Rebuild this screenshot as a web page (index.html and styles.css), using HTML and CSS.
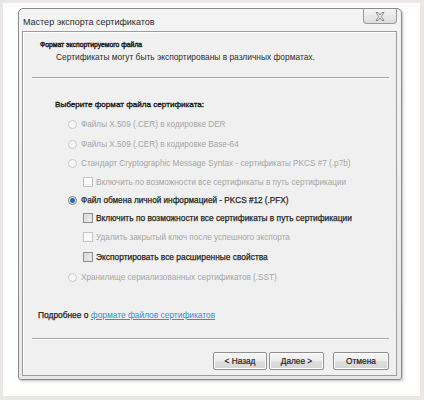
FILE: index.html
```html
<!DOCTYPE html>
<html lang="ru">
<head>
<meta charset="utf-8">
<link rel="stylesheet" href="styles.css">
</head>
<body>
<div class="frame">
  <div class="window">
    <div class="titlebar">
      <div class="title">Мастер экспорта сертификатов</div>
      <div class="close">
        <svg width="10" height="9" viewBox="0 0 10 9"><path d="M1 0.5 H3 L5 3 L7 0.5 H9 L6.2 4.5 L9 8.5 H7 L5 6 L3 8.5 H1 L3.8 4.5 Z" fill="#f4f4f4" stroke="#6e6e6e" stroke-width="0.8" stroke-linejoin="round"/></svg>
      </div>
    </div>
    <div class="panel">
      <div class="header">
        <div class="h-title">Формат экспортируемого файла</div>
        <div class="h-sub">Сертификаты могут быть экспортированы в различных форматах.</div>
      </div>
      <div class="sep"></div>
      <div class="body">
        <div class="row label">Выберите формат файла сертификата:</div>
        <div class="row opt dis"><span class="radio"></span>Файлы X.509 (.CER) в кодировке DER</div>
        <div class="row opt dis"><span class="radio"></span>Файлы X.509 (.CER) в кодировке Base-64</div>
        <div class="row opt dis r19"><span class="radio"></span>Стандарт Cryptographic Message Syntax - сертификаты PKCS #7 (.p7b)</div>
        <div class="row sub dis r18"><span class="check"></span>Включить по возможности все сертификаты в путь сертификации</div>
        <div class="row opt en r18"><span class="radio on"></span>Файл обмена личной информацией - PKCS #12 (.PFX)</div>
        <div class="row sub en wide r18"><span class="check"></span>Включить по возможности все сертификаты в путь сертификации</div>
        <div class="row sub dis"><span class="check"></span>Удалить закрытый ключ после успешного экспорта</div>
        <div class="row sub en wide"><span class="check"></span>Экспортировать все расширенные свойства</div>
        <div class="row opt dis"><span class="radio"></span>Хранилище сериализованных сертификатов (.SST)</div>
      </div>
      <div class="more"><span class="more-text">Подробнее о</span> <a class="link" href="#">формате файлов сертификатов</a></div>
      <div class="sep sep2"></div>
      <div class="buttons">
        <button class="btn b1">&lt; Назад</button>
        <button class="btn b2">Далее &gt;</button>
        <button class="btn b3">Отмена</button>
      </div>
    </div>
  </div>
</div>
</body>
</html>
```
FILE: styles.css
```css
* { box-sizing: border-box; }
body {
  margin: 0;
  background: #fff;
  font-family: "Liberation Sans", Arial, sans-serif;
}
.frame {
  width: 424px;
  height: 400px;
  border: 3px solid #ece7e7;
  border-right-width: 4px;
  border-bottom-width: 4px;
  padding: 5px 0 0 15px;
  background: #fff;
}
.window {
  width: 384px;
  height: 372px;
  border: 1px solid #8a8a8a;
  border-radius: 5px 5px 3px 3px;
  background: linear-gradient(#f4f4f4, #e8e8e8);
  padding: 0 4px 3px 3px;
  display: flex;
  flex-direction: column;
  box-shadow: 1px 1px 0 #cfcfcf, 2px 2px 3px rgba(0,0,0,0.12);
}
.titlebar {
  height: 22px;
  flex: none;
  display: flex;
  justify-content: space-between;
  align-items: flex-start;
}
.title {
  margin: 7px 0 0 1px;
  font-size: 9px;
  line-height: 12px;
  color: #2a2a2a;
}
.close {
  width: 34px;
  height: 15px;
  border: 1px solid #9a9a9a;
  border-top: none;
  border-radius: 0 0 4px 4px;
  background: linear-gradient(#f6f6f6, #dcdcdc);
  display: flex;
  align-items: center;
  justify-content: center;
}
.panel {
  flex: 1;
  border: 1px solid #9c9c9c;
  background: #f0f0f0;
  box-shadow: inset 1px 1px 0 #fff;
  display: flex;
  flex-direction: column;
}
.header { padding: 6px 0 0 17px; }
.h-title {
  font-size: 6.8px;
  line-height: 13px;
  color: #1a1a1a;
  -webkit-text-stroke: 0.4px #1a1a1a;
}
.h-sub {
  margin-left: 16px;
  font-size: 8.4px;
  line-height: 13px;
  color: #2e2e2e;
}
.sep {
  margin: 13px 7px 0 9px;
  height: 2px;
  border-top: 1px solid #a8a8a8;
  border-bottom: 1px solid #fbfbfb;
}
.body {
  margin-top: 15px;
  padding-left: 32px;
  display: flex;
  flex-direction: column;
}
.row {
  height: 20px;
  display: flex;
  align-items: center;
  font-size: 8.2px;
  color: #262626;
  white-space: nowrap;
}
.row.r19 { height: 19px; }
.row.r18 { height: 18px; }
.label {
  font-size: 8.1px;
  color: #1a1a1a;
  -webkit-text-stroke: 0.35px #1a1a1a;
}
.en { -webkit-text-stroke: 0.25px #262626; }
.wide { font-size: 8.4px; }
.opt { padding-left: 13px; }
.sub { padding-left: 28px; }
.dis { color: #a6a6a6; }
.radio {
  width: 9px;
  height: 9px;
  border-radius: 50%;
  border: 1px solid #c9c9c9;
  background: #f7f7f7;
  margin-right: 4px;
  flex: none;
}
.radio.on {
  border-color: #7d7d7d;
  background: radial-gradient(circle, #2a6cb4 0 2px, #7fa9d6 2.5px, #e8e8e8 3px);
}
.check {
  width: 10px;
  height: 10px;
  border: 1px solid #8e8e8e;
  background: linear-gradient(135deg, #d2d2d2, #f2f2f2);
  box-shadow: inset 0 0 0 1px #e2e2e2;
  margin-right: 3px;
  flex: none;
}
.dis .check {
  border-color: #c4c4c4;
  background: #fafafa;
  box-shadow: none;
}
.more {
  margin-top: 22px;
  padding-left: 15px;
  font-size: 8.4px;
  line-height: 12px;
  color: #222;
}
.more-text { -webkit-text-stroke: 0.25px #222; }
.link { color: #2f8fd8; }
.sep2 { margin-top: 17px; }
.buttons {
  margin: 12px 7px 0 0;
  display: flex;
  justify-content: flex-end;
}
.btn {
  height: 18px;
  padding: 0;
  border: 1px solid #8f8f8f;
  border-radius: 2px;
  background: linear-gradient(#f7f7f7 0, #ececec 50%, #dedede 51%, #d6d6d6 100%);
  box-shadow: inset 0 0 0 1px #fbfbfb;
  font-family: "Liberation Sans", Arial, sans-serif;
  font-size: 8.3px;
  color: #222;
  -webkit-text-stroke: 0.2px #222;
}
.b1 { width: 54px; }
.b2 { width: 55px; margin-left: 2px; }
.b3 { width: 56px; margin-left: 9px; }
```
